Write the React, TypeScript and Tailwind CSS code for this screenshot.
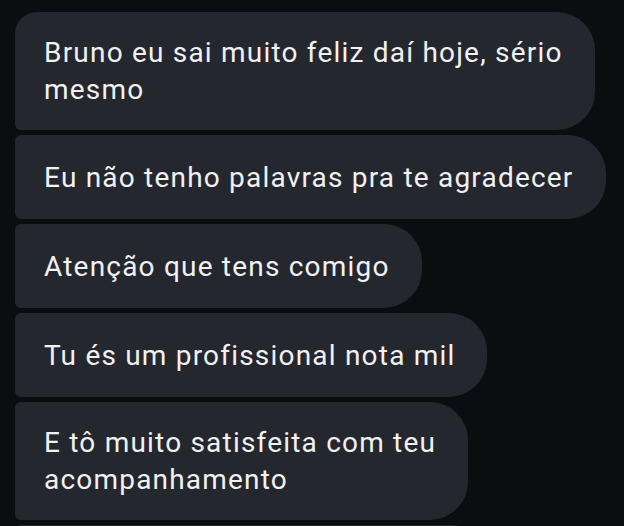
import React from "react";

type Message = {
  id: number;
  lines: Array<string>;
  corners: string;
};

const messages: Array<Message> = [
  {
    id: 1,
    lines: ["Bruno eu sai muito feliz daí hoje, sério", "mesmo"],
    corners: "rounded-tl-[22px] rounded-bl-[6px]",
  },
  {
    id: 2,
    lines: ["Eu não tenho palavras pra te agradecer"],
    corners: "rounded-l-[6px]",
  },
  {
    id: 3,
    lines: ["Atenção que tens comigo"],
    corners: "rounded-l-[6px]",
  },
  {
    id: 4,
    lines: ["Tu és um profissional nota mil"],
    corners: "rounded-l-[6px]",
  },
  {
    id: 5,
    lines: ["E tô muito satisfeita com teu", "acompanhamento"],
    corners: "rounded-l-[6px]",
  },
];

const Bubble: React.FC<{ message: Message }> = ({ message }) => {
  return (
    <div
      className={`w-fit min-h-[84px] flex items-center bg-[#25272e] rounded-r-[38px] pl-[29px] pr-[32px] py-[22px] ${message.corners}`}
    >
      <p className="whitespace-nowrap text-[28px] leading-[37px] tracking-[1.2px] text-[#f1f1f3]">
        {message.lines.map((line, i) => (
          <React.Fragment key={i}>
            {i > 0 && <br />}
            {line}
          </React.Fragment>
        ))}
      </p>
    </div>
  );
};

export default function App() {
  return (
    <div
      className="h-[526px] w-[624px] overflow-hidden bg-[#0b0d10]"
      style={{ fontFamily: "Roboto, 'Noto Sans', sans-serif" }}
    >
      <div className="flex flex-col gap-[5px] pt-[12px] pl-[15px]">
        {messages.map((message) => (
          <Bubble key={message.id} message={message} />
        ))}
        {/* next message, cut off by the bottom of the screen */}
        <div className="w-[474px] h-[84px] shrink-0 bg-[#25272e] rounded-l-[6px] rounded-r-[38px]" />
      </div>
    </div>
  );
}
